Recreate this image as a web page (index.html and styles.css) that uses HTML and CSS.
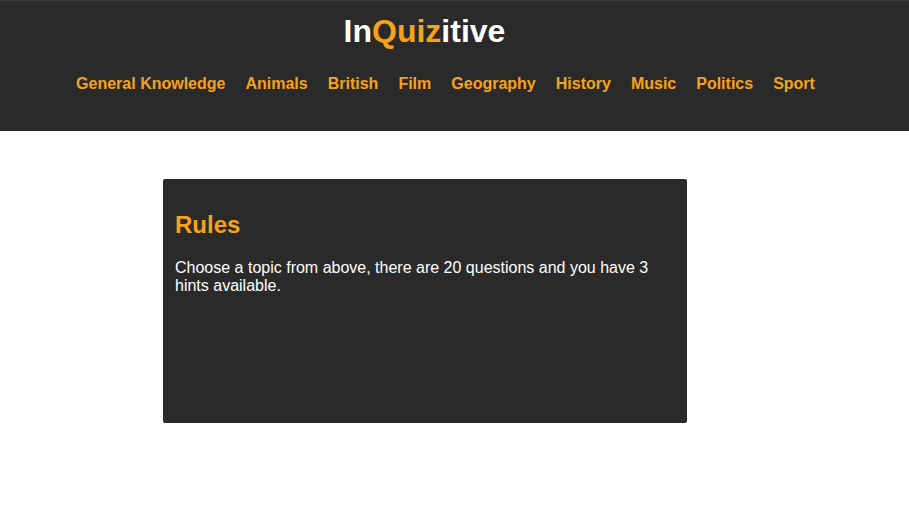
FILE: index.html
```html
<!DOCTYPE html>
<html lang="en">
<head>
<meta charset="utf-8">
<title>InQuizitive</title>
<link rel="stylesheet" href="styles.css">
</head>
<body>
<header class="site-header">
  <h1 class="logo">In<span class="accent">Quiz</span>itive</h1>
  <nav class="topics">
    <a href="#">General Knowledge</a>
    <a href="#">Animals</a>
    <a href="#">British</a>
    <a href="#">Film</a>
    <a href="#">Geography</a>
    <a href="#">History</a>
    <a href="#">Music</a>
    <a href="#">Politics</a>
    <a href="#">Sport</a>
  </nav>
</header>
<main class="content">
  <section class="card">
    <h2 class="card-title">Rules</h2>
    <p class="card-text">Choose a topic from above, there are 20 questions and you have 3 hints available.</p>
  </section>
</main>
</body>
</html>
```
FILE: styles.css
```css
html, body {
  margin: 0;
  padding: 0;
  background: #ffffff;
  font-family: "Liberation Sans", Arial, sans-serif;
}

.site-header {
  background: #2a2a2a;
  border-top: 1px solid #3a3a3a;
  height: 131px;
  box-sizing: border-box;
  padding-top: 12px;
}

.logo {
  margin: 0;
  font-size: 32px;
  font-weight: bold;
  line-height: 37px;
  color: #ffffff;
  text-align: center;
  padding-right: 60px;
}

.accent {
  color: #f7a21b;
}

.topics {
  display: flex;
  justify-content: center;
  margin-top: 25px;
  padding-left: 2px;
}

.topics a {
  color: #f7a21b;
  text-decoration: none;
  font-weight: bold;
  font-size: 16px;
  line-height: 18px;
  margin-right: 20px;
}

.content {
  padding-top: 48px;
}

.card {
  margin-left: 163px;
  width: 524px;
  height: 244px;
  box-sizing: border-box;
  background: #2a2a2a;
  border-radius: 2px;
  padding: 12px;
  display: flow-root;
}

.card-title {
  margin: 20px 0 20px;
  color: #f7a21b;
  font-size: 24px;
  font-weight: bold;
}

.card-text {
  margin: 0;
  color: #ffffff;
  font-size: 16px;
  line-height: 18px;
}
```
